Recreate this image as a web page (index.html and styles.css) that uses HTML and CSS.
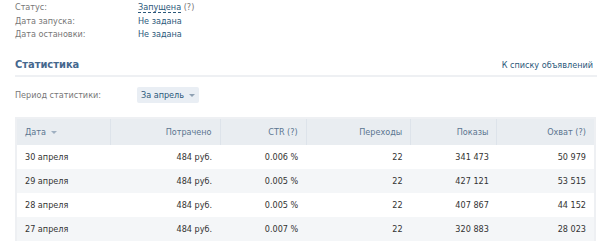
FILE: index.html
```html
<!DOCTYPE html>
<html lang="ru">
<head>
    <meta charset="UTF-8">
    <title>Статистика объявления</title>
    <link rel="stylesheet" href="styles.css">
</head>
<body>
    <div class="page">
        <div class="info">
            <div class="info-row">
                <div class="info-label">Статус:</div>
                <div class="info-value"><span class="dashed">Запущена</span> <span class="hint">(?)</span></div>
            </div>
            <div class="info-row">
                <div class="info-label">Дата запуска:</div>
                <div class="info-value">Не задана</div>
            </div>
            <div class="info-row">
                <div class="info-label">Дата остановки:</div>
                <div class="info-value">Не задана</div>
            </div>
        </div>

        <div class="section-head">
            <div class="section-title">Статистика</div>
            <a class="section-link" href="#">К списку объявлений</a>
        </div>

        <div class="period">
            <div class="info-label">Период статистики:</div>
            <div class="dropdown">За апрель <span class="arrow"></span></div>
        </div>

        <table class="stats">
            <thead>
                <tr>
                    <th class="col-date">Дата <span class="sort"></span></th>
                    <th>Потрачено</th>
                    <th>CTR (?)</th>
                    <th>Переходы</th>
                    <th>Показы</th>
                    <th>Охват (?)</th>
                </tr>
            </thead>
            <tbody>
                <tr>
                    <td class="col-date">30 апреля</td>
                    <td>484 руб.</td>
                    <td>0.006 %</td>
                    <td>22</td>
                    <td>341 473</td>
                    <td>50 979</td>
                </tr>
                <tr>
                    <td class="col-date">29 апреля</td>
                    <td>484 руб.</td>
                    <td>0.005 %</td>
                    <td>22</td>
                    <td>427 121</td>
                    <td>53 515</td>
                </tr>
                <tr>
                    <td class="col-date">28 апреля</td>
                    <td>484 руб.</td>
                    <td>0.005 %</td>
                    <td>22</td>
                    <td>407 867</td>
                    <td>44 152</td>
                </tr>
                <tr>
                    <td class="col-date">27 апреля</td>
                    <td>484 руб.</td>
                    <td>0.007 %</td>
                    <td>22</td>
                    <td>320 883</td>
                    <td>28 023</td>
                </tr>
            </tbody>
        </table>
    </div>
</body>
</html>
```

FILE: styles.css
```css
body {
    margin: 0;
    background-color: #fff;
    font-family: "DejaVu Sans Condensed", "DejaVu Sans", sans-serif;
    font-stretch: condensed;
    font-size: 9px;
    color: #333;
}
.page {
    padding: 0 3px 0 15px;
}
.info {
    padding-top: 1px;
}
.info-row {
    display: flex;
    height: 13.5px;
    line-height: 13px;
}
.info-label {
    width: 123px;
    color: #777;
}
.info-value {
    color: #2b587a;
}
.dashed {
    border-bottom: 1px dashed #2b587a;
}
.hint {
    color: #777;
}
.section-head {
    display: flex;
    justify-content: space-between;
    align-items: flex-end;
    margin-top: 16px;
    padding-bottom: 4px;
    border-bottom: 2px solid #eef0f3;
}
.section-title {
    font-weight: bold;
    font-size: 11px;
    color: #45688e;
}
.section-link {
    color: #2b587a;
    text-decoration: none;
    padding: 0 4px 1px 0;
}
.period {
    display: flex;
    align-items: center;
    margin-top: 10px;
}
.period .info-label {
    width: 122px;
}
.dropdown {
    background-color: #e9eef4;
    color: #2b587a;
    padding: 3px 4px 3px 4px;
    border-radius: 2px;
}
.arrow, .sort {
    display: inline-block;
    width: 0;
    height: 0;
    border-left: 3px solid transparent;
    border-right: 3px solid transparent;
    border-top: 3px solid #8fa1b3;
    vertical-align: middle;
    margin-left: 2px;
}
.sort {
    border-top-color: #9fb0c1;
}
.stats {
    width: 581px;
    margin-top: 14px;
    border-collapse: collapse;
    border: 2px solid #eef0f3;
}
.stats th {
    background-color: #e9edf1;
    color: #5b7590;
    font-weight: normal;
    text-align: right;
    height: 26px;
    padding: 0 8px;
    border-left: 1px solid #dde3ea;
}
.stats th:first-child {
    border-left: none;
}
.stats td {
    text-align: right;
    height: 24px;
    padding: 0 8px;
}
.stats .col-date {
    text-align: left;
    width: 77px;
}
.stats tbody tr:nth-child(even) td {
    background-color: #f4f6f8;
}
```
